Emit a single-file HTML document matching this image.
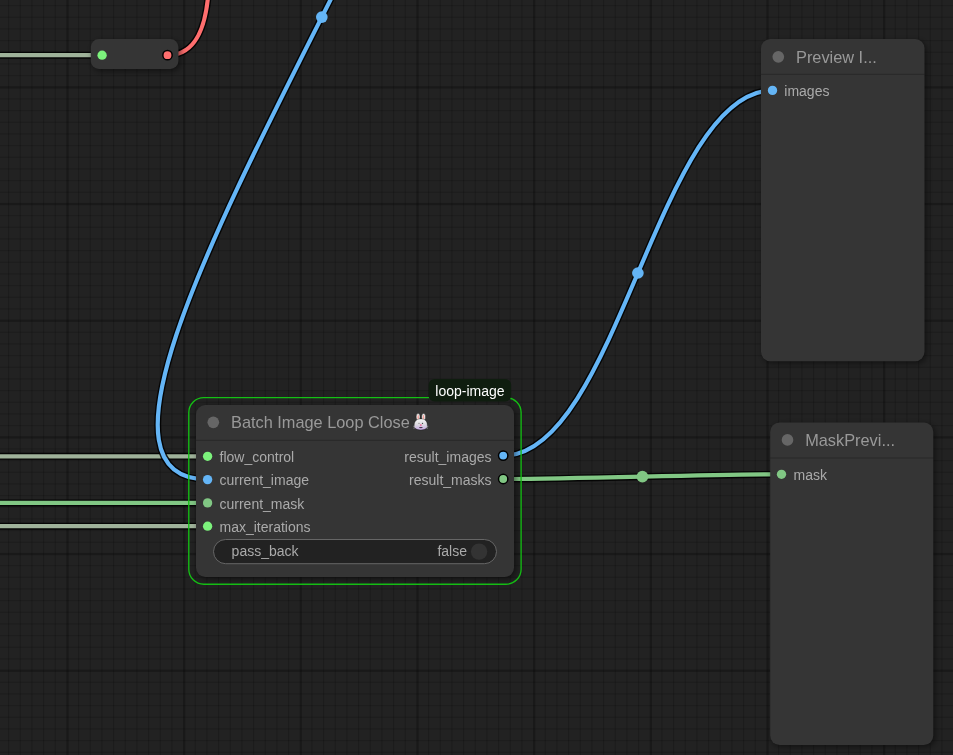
<!DOCTYPE html>
<html><head><meta charset="utf-8"><style>
html,body{margin:0;padding:0;background:#222222;width:953px;height:755px;overflow:hidden}
svg{display:block;will-change:transform}
text{font-family:"Liberation Sans",sans-serif}
.t{font-size:16.33px;fill:#999}
.l{font-size:14px;fill:#aaa}
.w{font-size:14px;fill:#aaa}
.b{font-size:14px;fill:#fff}
</style></head><body>
<svg width="953" height="755" viewBox="0 0 953 755">
<defs><filter id="sh" x="-20%" y="-20%" width="140%" height="140%"><feGaussianBlur stdDeviation="3"/></filter></defs>
<rect width="953" height="755" fill="#222222"/>
<rect x="8.00" y="0" width="1.167" height="755" fill="rgba(0,0,0,0.15)"/><rect x="19.66" y="0" width="1.167" height="755" fill="rgba(0,0,0,0.15)"/><rect x="31.33" y="0" width="1.167" height="755" fill="rgba(0,0,0,0.15)"/><rect x="43.00" y="0" width="1.167" height="755" fill="rgba(0,0,0,0.15)"/><rect x="54.66" y="0" width="1.167" height="755" fill="rgba(0,0,0,0.15)"/><rect x="66.33" y="0" width="2.333" height="755" fill="rgba(0,0,0,0.24)"/><rect x="78.00" y="0" width="1.167" height="755" fill="rgba(0,0,0,0.15)"/><rect x="89.66" y="0" width="1.167" height="755" fill="rgba(0,0,0,0.15)"/><rect x="101.33" y="0" width="1.167" height="755" fill="rgba(0,0,0,0.15)"/><rect x="113.00" y="0" width="1.167" height="755" fill="rgba(0,0,0,0.15)"/><rect x="124.66" y="0" width="1.167" height="755" fill="rgba(0,0,0,0.15)"/><rect x="136.33" y="0" width="1.167" height="755" fill="rgba(0,0,0,0.15)"/><rect x="148.00" y="0" width="1.167" height="755" fill="rgba(0,0,0,0.15)"/><rect x="159.66" y="0" width="1.167" height="755" fill="rgba(0,0,0,0.15)"/><rect x="171.33" y="0" width="1.167" height="755" fill="rgba(0,0,0,0.15)"/><rect x="183.00" y="0" width="2.333" height="755" fill="rgba(0,0,0,0.24)"/><rect x="194.66" y="0" width="1.167" height="755" fill="rgba(0,0,0,0.15)"/><rect x="206.33" y="0" width="1.167" height="755" fill="rgba(0,0,0,0.15)"/><rect x="218.00" y="0" width="1.167" height="755" fill="rgba(0,0,0,0.15)"/><rect x="229.66" y="0" width="1.167" height="755" fill="rgba(0,0,0,0.15)"/><rect x="241.33" y="0" width="1.167" height="755" fill="rgba(0,0,0,0.15)"/><rect x="253.00" y="0" width="1.167" height="755" fill="rgba(0,0,0,0.15)"/><rect x="264.66" y="0" width="1.167" height="755" fill="rgba(0,0,0,0.15)"/><rect x="276.33" y="0" width="1.167" height="755" fill="rgba(0,0,0,0.15)"/><rect x="288.00" y="0" width="1.167" height="755" fill="rgba(0,0,0,0.15)"/><rect x="299.66" y="0" width="2.333" height="755" fill="rgba(0,0,0,0.24)"/><rect x="311.33" y="0" width="1.167" height="755" fill="rgba(0,0,0,0.15)"/><rect x="323.00" y="0" width="1.167" height="755" fill="rgba(0,0,0,0.15)"/><rect x="334.66" y="0" width="1.167" height="755" fill="rgba(0,0,0,0.15)"/><rect x="346.33" y="0" width="1.167" height="755" fill="rgba(0,0,0,0.15)"/><rect x="358.00" y="0" width="1.167" height="755" fill="rgba(0,0,0,0.15)"/><rect x="369.66" y="0" width="1.167" height="755" fill="rgba(0,0,0,0.15)"/><rect x="381.33" y="0" width="1.167" height="755" fill="rgba(0,0,0,0.15)"/><rect x="393.00" y="0" width="1.167" height="755" fill="rgba(0,0,0,0.15)"/><rect x="404.66" y="0" width="1.167" height="755" fill="rgba(0,0,0,0.15)"/><rect x="416.33" y="0" width="2.333" height="755" fill="rgba(0,0,0,0.24)"/><rect x="428.00" y="0" width="1.167" height="755" fill="rgba(0,0,0,0.15)"/><rect x="439.66" y="0" width="1.167" height="755" fill="rgba(0,0,0,0.15)"/><rect x="451.33" y="0" width="1.167" height="755" fill="rgba(0,0,0,0.15)"/><rect x="463.00" y="0" width="1.167" height="755" fill="rgba(0,0,0,0.15)"/><rect x="474.66" y="0" width="1.167" height="755" fill="rgba(0,0,0,0.15)"/><rect x="486.33" y="0" width="1.167" height="755" fill="rgba(0,0,0,0.15)"/><rect x="498.00" y="0" width="1.167" height="755" fill="rgba(0,0,0,0.15)"/><rect x="509.66" y="0" width="1.167" height="755" fill="rgba(0,0,0,0.15)"/><rect x="521.33" y="0" width="1.167" height="755" fill="rgba(0,0,0,0.15)"/><rect x="533.00" y="0" width="2.333" height="755" fill="rgba(0,0,0,0.24)"/><rect x="544.66" y="0" width="1.167" height="755" fill="rgba(0,0,0,0.15)"/><rect x="556.33" y="0" width="1.167" height="755" fill="rgba(0,0,0,0.15)"/><rect x="568.00" y="0" width="1.167" height="755" fill="rgba(0,0,0,0.15)"/><rect x="579.66" y="0" width="1.167" height="755" fill="rgba(0,0,0,0.15)"/><rect x="591.33" y="0" width="1.167" height="755" fill="rgba(0,0,0,0.15)"/><rect x="603.00" y="0" width="1.167" height="755" fill="rgba(0,0,0,0.15)"/><rect x="614.66" y="0" width="1.167" height="755" fill="rgba(0,0,0,0.15)"/><rect x="626.33" y="0" width="1.167" height="755" fill="rgba(0,0,0,0.15)"/><rect x="638.00" y="0" width="1.167" height="755" fill="rgba(0,0,0,0.15)"/><rect x="649.67" y="0" width="2.333" height="755" fill="rgba(0,0,0,0.24)"/><rect x="661.33" y="0" width="1.167" height="755" fill="rgba(0,0,0,0.15)"/><rect x="673.00" y="0" width="1.167" height="755" fill="rgba(0,0,0,0.15)"/><rect x="684.67" y="0" width="1.167" height="755" fill="rgba(0,0,0,0.15)"/><rect x="696.33" y="0" width="1.167" height="755" fill="rgba(0,0,0,0.15)"/><rect x="708.00" y="0" width="1.167" height="755" fill="rgba(0,0,0,0.15)"/><rect x="719.67" y="0" width="1.167" height="755" fill="rgba(0,0,0,0.15)"/><rect x="731.33" y="0" width="1.167" height="755" fill="rgba(0,0,0,0.15)"/><rect x="743.00" y="0" width="1.167" height="755" fill="rgba(0,0,0,0.15)"/><rect x="754.67" y="0" width="1.167" height="755" fill="rgba(0,0,0,0.15)"/><rect x="766.33" y="0" width="2.333" height="755" fill="rgba(0,0,0,0.24)"/><rect x="778.00" y="0" width="1.167" height="755" fill="rgba(0,0,0,0.15)"/><rect x="789.67" y="0" width="1.167" height="755" fill="rgba(0,0,0,0.15)"/><rect x="801.33" y="0" width="1.167" height="755" fill="rgba(0,0,0,0.15)"/><rect x="813.00" y="0" width="1.167" height="755" fill="rgba(0,0,0,0.15)"/><rect x="824.67" y="0" width="1.167" height="755" fill="rgba(0,0,0,0.15)"/><rect x="836.33" y="0" width="1.167" height="755" fill="rgba(0,0,0,0.15)"/><rect x="848.00" y="0" width="1.167" height="755" fill="rgba(0,0,0,0.15)"/><rect x="859.67" y="0" width="1.167" height="755" fill="rgba(0,0,0,0.15)"/><rect x="871.33" y="0" width="1.167" height="755" fill="rgba(0,0,0,0.15)"/><rect x="883.00" y="0" width="2.333" height="755" fill="rgba(0,0,0,0.24)"/><rect x="894.67" y="0" width="1.167" height="755" fill="rgba(0,0,0,0.15)"/><rect x="906.33" y="0" width="1.167" height="755" fill="rgba(0,0,0,0.15)"/><rect x="918.00" y="0" width="1.167" height="755" fill="rgba(0,0,0,0.15)"/><rect x="929.67" y="0" width="1.167" height="755" fill="rgba(0,0,0,0.15)"/><rect x="941.33" y="0" width="1.167" height="755" fill="rgba(0,0,0,0.15)"/><rect x="953.00" y="0" width="1.167" height="755" fill="rgba(0,0,0,0.15)"/><rect x="0" y="5.02" width="953" height="1.167" fill="rgba(0,0,0,0.15)"/><rect x="0" y="16.68" width="953" height="1.167" fill="rgba(0,0,0,0.15)"/><rect x="0" y="28.35" width="953" height="1.167" fill="rgba(0,0,0,0.15)"/><rect x="0" y="40.02" width="953" height="1.167" fill="rgba(0,0,0,0.15)"/><rect x="0" y="51.68" width="953" height="1.167" fill="rgba(0,0,0,0.15)"/><rect x="0" y="63.35" width="953" height="1.167" fill="rgba(0,0,0,0.15)"/><rect x="0" y="75.02" width="953" height="1.167" fill="rgba(0,0,0,0.15)"/><rect x="0" y="86.23" width="953" height="2.333" fill="rgba(0,0,0,0.24)"/><rect x="0" y="98.35" width="953" height="1.167" fill="rgba(0,0,0,0.15)"/><rect x="0" y="110.02" width="953" height="1.167" fill="rgba(0,0,0,0.15)"/><rect x="0" y="121.68" width="953" height="1.167" fill="rgba(0,0,0,0.15)"/><rect x="0" y="133.35" width="953" height="1.167" fill="rgba(0,0,0,0.15)"/><rect x="0" y="145.02" width="953" height="1.167" fill="rgba(0,0,0,0.15)"/><rect x="0" y="156.68" width="953" height="1.167" fill="rgba(0,0,0,0.15)"/><rect x="0" y="168.35" width="953" height="1.167" fill="rgba(0,0,0,0.15)"/><rect x="0" y="180.02" width="953" height="1.167" fill="rgba(0,0,0,0.15)"/><rect x="0" y="191.68" width="953" height="1.167" fill="rgba(0,0,0,0.15)"/><rect x="0" y="202.90" width="953" height="2.333" fill="rgba(0,0,0,0.24)"/><rect x="0" y="215.02" width="953" height="1.167" fill="rgba(0,0,0,0.15)"/><rect x="0" y="226.68" width="953" height="1.167" fill="rgba(0,0,0,0.15)"/><rect x="0" y="238.35" width="953" height="1.167" fill="rgba(0,0,0,0.15)"/><rect x="0" y="250.02" width="953" height="1.167" fill="rgba(0,0,0,0.15)"/><rect x="0" y="261.68" width="953" height="1.167" fill="rgba(0,0,0,0.15)"/><rect x="0" y="273.35" width="953" height="1.167" fill="rgba(0,0,0,0.15)"/><rect x="0" y="285.02" width="953" height="1.167" fill="rgba(0,0,0,0.15)"/><rect x="0" y="296.68" width="953" height="1.167" fill="rgba(0,0,0,0.15)"/><rect x="0" y="308.35" width="953" height="1.167" fill="rgba(0,0,0,0.15)"/><rect x="0" y="319.57" width="953" height="2.333" fill="rgba(0,0,0,0.24)"/><rect x="0" y="331.68" width="953" height="1.167" fill="rgba(0,0,0,0.15)"/><rect x="0" y="343.35" width="953" height="1.167" fill="rgba(0,0,0,0.15)"/><rect x="0" y="355.02" width="953" height="1.167" fill="rgba(0,0,0,0.15)"/><rect x="0" y="366.68" width="953" height="1.167" fill="rgba(0,0,0,0.15)"/><rect x="0" y="378.35" width="953" height="1.167" fill="rgba(0,0,0,0.15)"/><rect x="0" y="390.02" width="953" height="1.167" fill="rgba(0,0,0,0.15)"/><rect x="0" y="401.68" width="953" height="1.167" fill="rgba(0,0,0,0.15)"/><rect x="0" y="413.35" width="953" height="1.167" fill="rgba(0,0,0,0.15)"/><rect x="0" y="425.02" width="953" height="1.167" fill="rgba(0,0,0,0.15)"/><rect x="0" y="436.23" width="953" height="2.333" fill="rgba(0,0,0,0.24)"/><rect x="0" y="448.35" width="953" height="1.167" fill="rgba(0,0,0,0.15)"/><rect x="0" y="460.02" width="953" height="1.167" fill="rgba(0,0,0,0.15)"/><rect x="0" y="471.68" width="953" height="1.167" fill="rgba(0,0,0,0.15)"/><rect x="0" y="483.35" width="953" height="1.167" fill="rgba(0,0,0,0.15)"/><rect x="0" y="495.02" width="953" height="1.167" fill="rgba(0,0,0,0.15)"/><rect x="0" y="506.68" width="953" height="1.167" fill="rgba(0,0,0,0.15)"/><rect x="0" y="518.35" width="953" height="1.167" fill="rgba(0,0,0,0.15)"/><rect x="0" y="530.02" width="953" height="1.167" fill="rgba(0,0,0,0.15)"/><rect x="0" y="541.68" width="953" height="1.167" fill="rgba(0,0,0,0.15)"/><rect x="0" y="552.90" width="953" height="2.333" fill="rgba(0,0,0,0.24)"/><rect x="0" y="565.02" width="953" height="1.167" fill="rgba(0,0,0,0.15)"/><rect x="0" y="576.68" width="953" height="1.167" fill="rgba(0,0,0,0.15)"/><rect x="0" y="588.35" width="953" height="1.167" fill="rgba(0,0,0,0.15)"/><rect x="0" y="600.02" width="953" height="1.167" fill="rgba(0,0,0,0.15)"/><rect x="0" y="611.68" width="953" height="1.167" fill="rgba(0,0,0,0.15)"/><rect x="0" y="623.35" width="953" height="1.167" fill="rgba(0,0,0,0.15)"/><rect x="0" y="635.02" width="953" height="1.167" fill="rgba(0,0,0,0.15)"/><rect x="0" y="646.68" width="953" height="1.167" fill="rgba(0,0,0,0.15)"/><rect x="0" y="658.35" width="953" height="1.167" fill="rgba(0,0,0,0.15)"/><rect x="0" y="669.57" width="953" height="2.333" fill="rgba(0,0,0,0.24)"/><rect x="0" y="681.68" width="953" height="1.167" fill="rgba(0,0,0,0.15)"/><rect x="0" y="693.35" width="953" height="1.167" fill="rgba(0,0,0,0.15)"/><rect x="0" y="705.02" width="953" height="1.167" fill="rgba(0,0,0,0.15)"/><rect x="0" y="716.68" width="953" height="1.167" fill="rgba(0,0,0,0.15)"/><rect x="0" y="728.35" width="953" height="1.167" fill="rgba(0,0,0,0.15)"/><rect x="0" y="740.02" width="953" height="1.167" fill="rgba(0,0,0,0.15)"/><rect x="0" y="751.68" width="953" height="1.167" fill="rgba(0,0,0,0.15)"/>
<path d="M-20,55.2 L102,55.2" fill="none" stroke="rgba(0,0,0,0.85)" stroke-width="7.0"/><path d="M-20,55.2 L102,55.2" fill="none" stroke="#9fb29a" stroke-width="4.2"/><path d="M167.50,55.20 C283.41,55.20 108.09,-405.00 224.00,-405.00" fill="none" stroke="rgba(0,0,0,0.85)" stroke-width="7.0"/><path d="M167.50,55.20 C283.41,55.20 108.09,-405.00 224.00,-405.00" fill="none" stroke="#ff6e6e" stroke-width="4.2"/><path d="M-20,456.3 L207.6,456.3" fill="none" stroke="rgba(0,0,0,0.85)" stroke-width="7.0"/><path d="M-20,456.3 L207.6,456.3" fill="none" stroke="#9fb29a" stroke-width="4.2"/><path d="M-20,502.9 L207.6,502.9" fill="none" stroke="rgba(0,0,0,0.85)" stroke-width="7.0"/><path d="M-20,502.9 L207.6,502.9" fill="none" stroke="#81C784" stroke-width="4.2"/><path d="M-20,526.2 L207.6,526.2" fill="none" stroke="rgba(0,0,0,0.85)" stroke-width="7.0"/><path d="M-20,526.2 L207.6,526.2" fill="none" stroke="#9fb29a" stroke-width="4.2"/><path d="M436.00,-445.30 C674.15,-445.30 -30.55,479.50 207.60,479.50" fill="none" stroke="rgba(0,0,0,0.85)" stroke-width="7.0"/><path d="M436.00,-445.30 C674.15,-445.30 -30.55,479.50 207.60,479.50" fill="none" stroke="#64B5F6" stroke-width="4.2"/><circle cx="321.80" cy="17.10" r="5.83" fill="#64B5F6"/><path d="M503.30,455.60 C616.72,455.60 659.08,90.40 772.50,90.40" fill="none" stroke="rgba(0,0,0,0.85)" stroke-width="7.0"/><path d="M503.30,455.60 C616.72,455.60 659.08,90.40 772.50,90.40" fill="none" stroke="#64B5F6" stroke-width="4.2"/><circle cx="637.90" cy="273.00" r="5.83" fill="#64B5F6"/><path d="M503.30,479.00 C572.86,479.00 711.94,474.30 781.50,474.30" fill="none" stroke="rgba(0,0,0,0.85)" stroke-width="7.0"/><path d="M503.30,479.00 C572.86,479.00 711.94,474.30 781.50,474.30" fill="none" stroke="#81C784" stroke-width="4.2"/><circle cx="642.40" cy="476.65" r="5.83" fill="#81C784"/>
<rect x="92.80" y="41.10" width="87.60" height="29.80" rx="8" fill="rgba(0,0,0,0.5)" filter="url(#sh)"/><rect x="90.80" y="39.10" width="87.60" height="29.80" rx="8" fill="#353535"/><circle cx="102.10" cy="55.20" r="4.67" fill="#7cf27c"/><circle cx="167.50" cy="55.20" r="4.67" fill="#ff6e6e" stroke="#000" stroke-width="1.5"/><rect x="763.00" y="41.00" width="163.50" height="322.20" rx="9.33" fill="rgba(0,0,0,0.5)" filter="url(#sh)"/><rect x="761.00" y="39.00" width="163.50" height="322.20" rx="9.33" fill="#353535"/><rect x="761.00" y="73.80" width="163.50" height="1.2" fill="rgba(0,0,0,0.2)"/><circle cx="778.30" cy="56.80" r="5.83" fill="#666"/><text x="796.00" y="62.50" class="t">Preview I...</text><circle cx="772.50" cy="90.40" r="4.67" fill="#64B5F6"/><text x="784.30" y="96.00" class="l" text-anchor="start">images</text><rect x="772.20" y="424.60" width="163.10" height="322.30" rx="9.33" fill="rgba(0,0,0,0.5)" filter="url(#sh)"/><rect x="770.20" y="422.60" width="163.10" height="322.30" rx="9.33" fill="#353535"/><rect x="770.20" y="457.40" width="163.10" height="1.2" fill="rgba(0,0,0,0.2)"/><circle cx="787.50" cy="439.90" r="5.83" fill="#666"/><text x="805.20" y="445.60" class="t">MaskPrevi...</text><circle cx="781.50" cy="474.30" r="4.67" fill="#81C784"/><text x="793.60" y="479.90" class="l" text-anchor="start">mask</text><rect x="188.8" y="397.6" width="332.3" height="186.6" rx="15" fill="none" stroke="#14c014" stroke-width="1.35"/><rect x="198.00" y="407.00" width="318.00" height="172.00" rx="9.33" fill="rgba(0,0,0,0.5)" filter="url(#sh)"/><rect x="196.00" y="405.00" width="318.00" height="172.00" rx="9.33" fill="#353535"/><rect x="196.00" y="439.80" width="318.00" height="1.2" fill="rgba(0,0,0,0.2)"/><circle cx="213.30" cy="422.30" r="5.83" fill="#666"/><text x="231.00" y="428.00" class="t">Batch Image Loop Close</text><circle cx="207.60" cy="456.30" r="4.67" fill="#7cf27c"/><text x="219.50" y="461.90" class="l" text-anchor="start">flow_control</text><circle cx="207.60" cy="479.60" r="4.67" fill="#64B5F6"/><text x="219.50" y="485.20" class="l" text-anchor="start">current_image</text><circle cx="207.60" cy="502.90" r="4.67" fill="#81C784"/><text x="219.50" y="508.50" class="l" text-anchor="start">current_mask</text><circle cx="207.60" cy="526.20" r="4.67" fill="#7cf27c"/><text x="219.50" y="531.80" class="l" text-anchor="start">max_iterations</text><circle cx="503.20" cy="455.60" r="4.67" fill="#64B5F6" stroke="#000" stroke-width="1.5"/><text x="491.50" y="461.90" class="l" text-anchor="end">result_images</text><circle cx="503.20" cy="479.00" r="4.67" fill="#81C784" stroke="#000" stroke-width="1.5"/><text x="491.50" y="485.20" class="l" text-anchor="end">result_masks</text><rect x="213.5" y="539.5" width="283" height="24.2" rx="12.1" fill="#222" stroke="#666" stroke-width="1"/><text x="231.60" y="556.00" class="w" text-anchor="start">pass_back</text><text x="467.00" y="556.00" class="w" text-anchor="end">false</text><circle cx="479.1" cy="551.6" r="8.2" fill="#333"/><rect x="428.6" y="379.1" width="82.6" height="22.5" rx="6" fill="#0f1d0f"/><text x="469.9" y="395.5" class="b" text-anchor="middle">loop-image</text><g>
<defs><linearGradient id="rg" x1="0" y1="0" x2="0" y2="1">
<stop offset="0" stop-color="#f6f6f6"/><stop offset="0.5" stop-color="#dcdbe0"/><stop offset="1" stop-color="#c7a9e4"/></linearGradient></defs>
<ellipse cx="418.1" cy="416.9" rx="1.9" ry="3.3" fill="#f2f2f2" stroke="rgba(0,0,0,0.55)" stroke-width="0.6"/>
<ellipse cx="423.6" cy="416.9" rx="1.9" ry="3.3" fill="#f2f2f2" stroke="rgba(0,0,0,0.55)" stroke-width="0.6"/>
<ellipse cx="418.2" cy="417.2" rx="0.75" ry="2.5" fill="#f5a09a"/>
<ellipse cx="423.5" cy="417.2" rx="0.75" ry="2.5" fill="#f5a09a"/>
<path d="M414.2,425.6 C414.2,420.6 417,418.9 420.8,418.9 C424.6,418.9 427.3,420.6 427.3,425.6 C427.3,428.6 424.8,429.9 420.8,429.9 C416.8,429.9 414.2,428.6 414.2,425.6 Z" fill="url(#rg)" stroke="rgba(0,0,0,0.45)" stroke-width="0.6"/>
<path d="M413.2,426.2 L415.2,426.6 M413.5,428.2 L415.3,427.6 M428.3,426.2 L426.3,426.6 M428,428.2 L426.2,427.6" stroke="#ddd" stroke-width="0.5"/>
<circle cx="419.0" cy="423.3" r="0.6" fill="#777"/>
<circle cx="422.5" cy="423.3" r="0.65" fill="#333"/>
<ellipse cx="420.8" cy="425.0" rx="1.0" ry="0.85" fill="#ef5f98"/>
<path d="M419.2,426.9 Q420.8,427.3 422.6,426.9 L422.3,428.0 Q420.8,428.3 419.4,428.0 Z" fill="#4a3550"/>
</g>
</svg></body></html>
